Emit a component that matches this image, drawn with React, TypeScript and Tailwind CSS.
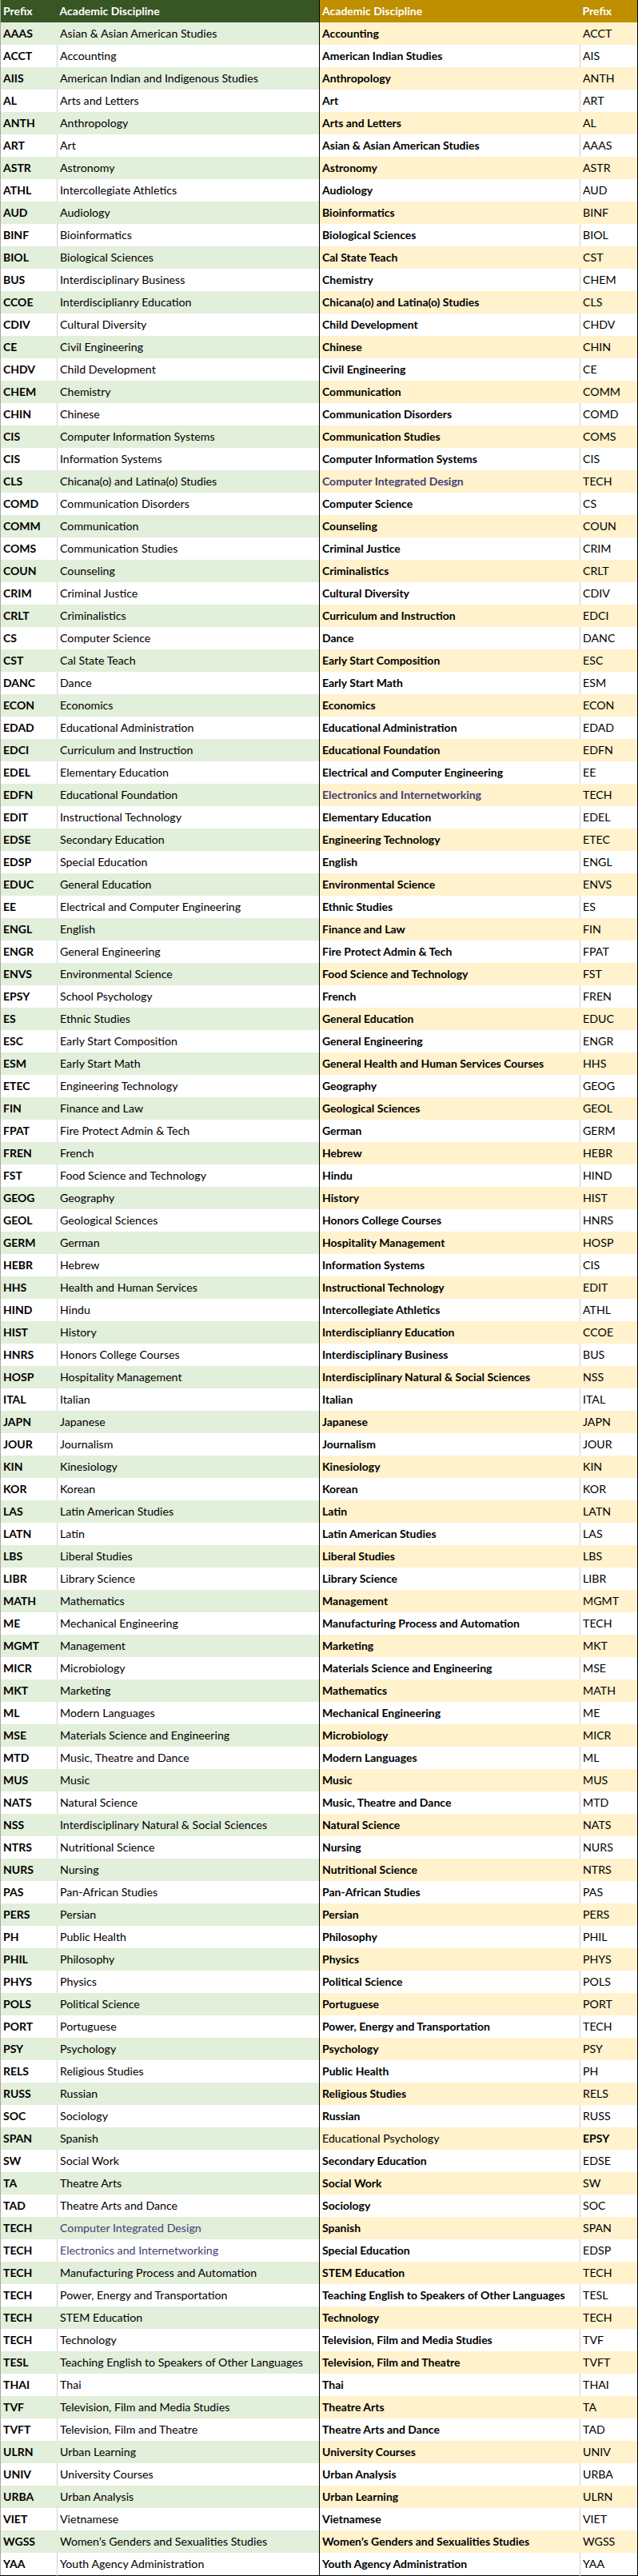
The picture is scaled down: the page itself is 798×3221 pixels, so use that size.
import React from 'react';

type Row = [string, string, string?];

// prefix -> discipline, sorted by prefix
const byPrefix: Row[] = [
  ['AAAS', 'Asian & Asian American Studies'],
  ['ACCT', 'Accounting'],
  ['AIIS', 'American Indian and Indigenous Studies'],
  ['AL', 'Arts and Letters'],
  ['ANTH', 'Anthropology'],
  ['ART', 'Art'],
  ['ASTR', 'Astronomy'],
  ['ATHL', 'Intercollegiate Athletics'],
  ['AUD', 'Audiology'],
  ['BINF', 'Bioinformatics'],
  ['BIOL', 'Biological Sciences'],
  ['BUS', 'Interdisciplinary Business'],
  ['CCOE', 'Interdisciplianry Education'],
  ['CDIV', 'Cultural Diversity'],
  ['CE', 'Civil Engineering'],
  ['CHDV', 'Child Development'],
  ['CHEM', 'Chemistry'],
  ['CHIN', 'Chinese'],
  ['CIS', 'Computer Information Systems'],
  ['CIS', 'Information Systems'],
  ['CLS', 'Chicana(o) and Latina(o) Studies'],
  ['COMD', 'Communication Disorders'],
  ['COMM', 'Communication'],
  ['COMS', 'Communication Studies'],
  ['COUN', 'Counseling'],
  ['CRIM', 'Criminal Justice'],
  ['CRLT', 'Criminalistics'],
  ['CS', 'Computer Science'],
  ['CST', 'Cal State Teach'],
  ['DANC', 'Dance'],
  ['ECON', 'Economics'],
  ['EDAD', 'Educational Administration'],
  ['EDCI', 'Curriculum and Instruction'],
  ['EDEL', 'Elementary Education'],
  ['EDFN', 'Educational Foundation'],
  ['EDIT', 'Instructional Technology'],
  ['EDSE', 'Secondary Education'],
  ['EDSP', 'Special Education'],
  ['EDUC', 'General Education'],
  ['EE', 'Electrical and Computer Engineering'],
  ['ENGL', 'English'],
  ['ENGR', 'General Engineering'],
  ['ENVS', 'Environmental Science'],
  ['EPSY', 'School Psychology'],
  ['ES', 'Ethnic Studies'],
  ['ESC', 'Early Start Composition'],
  ['ESM', 'Early Start Math'],
  ['ETEC', 'Engineering Technology'],
  ['FIN', 'Finance and Law'],
  ['FPAT', 'Fire Protect Admin & Tech'],
  ['FREN', 'French'],
  ['FST', 'Food Science and Technology'],
  ['GEOG', 'Geography'],
  ['GEOL', 'Geological Sciences'],
  ['GERM', 'German'],
  ['HEBR', 'Hebrew'],
  ['HHS', 'Health and Human Services'],
  ['HIND', 'Hindu'],
  ['HIST', 'History'],
  ['HNRS', 'Honors College Courses'],
  ['HOSP', 'Hospitality Management'],
  ['ITAL', 'Italian'],
  ['JAPN', 'Japanese'],
  ['JOUR', 'Journalism'],
  ['KIN', 'Kinesiology'],
  ['KOR', 'Korean'],
  ['LAS', 'Latin American Studies'],
  ['LATN', 'Latin'],
  ['LBS', 'Liberal Studies'],
  ['LIBR', 'Library Science'],
  ['MATH', 'Mathematics'],
  ['ME', 'Mechanical Engineering'],
  ['MGMT', 'Management'],
  ['MICR', 'Microbiology'],
  ['MKT', 'Marketing'],
  ['ML', 'Modern Languages'],
  ['MSE', 'Materials Science and Engineering'],
  ['MTD', 'Music, Theatre and Dance'],
  ['MUS', 'Music'],
  ['NATS', 'Natural Science'],
  ['NSS', 'Interdisciplinary Natural & Social Sciences'],
  ['NTRS', 'Nutritional Science'],
  ['NURS', 'Nursing'],
  ['PAS', 'Pan-African Studies'],
  ['PERS', 'Persian'],
  ['PH', 'Public Health'],
  ['PHIL', 'Philosophy'],
  ['PHYS', 'Physics'],
  ['POLS', 'Political Science'],
  ['PORT', 'Portuguese'],
  ['PSY', 'Psychology'],
  ['RELS', 'Religious Studies'],
  ['RUSS', 'Russian'],
  ['SOC', 'Sociology'],
  ['SPAN', 'Spanish'],
  ['SW', 'Social Work'],
  ['TA', 'Theatre Arts'],
  ['TAD', 'Theatre Arts and Dance'],
  ['TECH', 'Computer Integrated Design', 'input'],
  ['TECH', 'Electronics and Internetworking', 'input'],
  ['TECH', 'Manufacturing Process and Automation'],
  ['TECH', 'Power, Energy and Transportation'],
  ['TECH', 'STEM Education'],
  ['TECH', 'Technology'],
  ['TESL', 'Teaching English to Speakers of Other Languages'],
  ['THAI', 'Thai'],
  ['TVF', 'Television, Film and Media Studies'],
  ['TVFT', 'Television, Film and Theatre'],
  ['ULRN', 'Urban Learning'],
  ['UNIV', 'University Courses'],
  ['URBA', 'Urban Analysis'],
  ['VIET', 'Vietnamese'],
  ['WGSS', 'Women’s Genders and Sexualities Studies'],
  ['YAA', 'Youth Agency Administration'],
];

// discipline -> prefix, sorted by name
const byName: Row[] = [
  ['Accounting', 'ACCT'],
  ['American Indian Studies', 'AIS'],
  ['Anthropology', 'ANTH'],
  ['Art', 'ART'],
  ['Arts and Letters', 'AL'],
  ['Asian & Asian American Studies', 'AAAS'],
  ['Astronomy', 'ASTR'],
  ['Audiology', 'AUD'],
  ['Bioinformatics', 'BINF'],
  ['Biological Sciences', 'BIOL'],
  ['Cal State Teach', 'CST'],
  ['Chemistry', 'CHEM'],
  ['Chicana(o) and Latina(o) Studies', 'CLS'],
  ['Child Development', 'CHDV'],
  ['Chinese', 'CHIN'],
  ['Civil Engineering', 'CE'],
  ['Communication', 'COMM'],
  ['Communication Disorders', 'COMD'],
  ['Communication Studies', 'COMS'],
  ['Computer Information Systems', 'CIS'],
  ['Computer Integrated Design', 'TECH', 'input'],
  ['Computer Science', 'CS'],
  ['Counseling', 'COUN'],
  ['Criminal Justice', 'CRIM'],
  ['Criminalistics', 'CRLT'],
  ['Cultural Diversity', 'CDIV'],
  ['Curriculum and Instruction', 'EDCI'],
  ['Dance', 'DANC'],
  ['Early Start Composition', 'ESC'],
  ['Early Start Math', 'ESM'],
  ['Economics', 'ECON'],
  ['Educational Administration', 'EDAD'],
  ['Educational Foundation', 'EDFN'],
  ['Electrical and Computer Engineering', 'EE'],
  ['Electronics and Internetworking', 'TECH', 'input'],
  ['Elementary Education', 'EDEL'],
  ['Engineering Technology', 'ETEC'],
  ['English', 'ENGL'],
  ['Environmental Science', 'ENVS'],
  ['Ethnic Studies', 'ES'],
  ['Finance and Law', 'FIN'],
  ['Fire Protect Admin & Tech', 'FPAT'],
  ['Food Science and Technology', 'FST'],
  ['French', 'FREN'],
  ['General Education', 'EDUC'],
  ['General Engineering', 'ENGR'],
  ['General Health and Human Services Courses', 'HHS'],
  ['Geography', 'GEOG'],
  ['Geological Sciences', 'GEOL'],
  ['German', 'GERM'],
  ['Hebrew', 'HEBR'],
  ['Hindu', 'HIND'],
  ['History', 'HIST'],
  ['Honors College Courses', 'HNRS'],
  ['Hospitality Management', 'HOSP'],
  ['Information Systems', 'CIS'],
  ['Instructional Technology', 'EDIT'],
  ['Intercollegiate Athletics', 'ATHL'],
  ['Interdisciplianry Education', 'CCOE'],
  ['Interdisciplinary Business', 'BUS'],
  ['Interdisciplinary Natural & Social Sciences', 'NSS'],
  ['Italian', 'ITAL'],
  ['Japanese', 'JAPN'],
  ['Journalism', 'JOUR'],
  ['Kinesiology', 'KIN'],
  ['Korean', 'KOR'],
  ['Latin', 'LATN'],
  ['Latin American Studies', 'LAS'],
  ['Liberal Studies', 'LBS'],
  ['Library Science', 'LIBR'],
  ['Management', 'MGMT'],
  ['Manufacturing Process and Automation', 'TECH'],
  ['Marketing', 'MKT'],
  ['Materials Science and Engineering', 'MSE'],
  ['Mathematics', 'MATH'],
  ['Mechanical Engineering', 'ME'],
  ['Microbiology', 'MICR'],
  ['Modern Languages', 'ML'],
  ['Music', 'MUS'],
  ['Music, Theatre and Dance', 'MTD'],
  ['Natural Science', 'NATS'],
  ['Nursing', 'NURS'],
  ['Nutritional Science', 'NTRS'],
  ['Pan-African Studies', 'PAS'],
  ['Persian', 'PERS'],
  ['Philosophy', 'PHIL'],
  ['Physics', 'PHYS'],
  ['Political Science', 'POLS'],
  ['Portuguese', 'PORT'],
  ['Power, Energy and Transportation', 'TECH'],
  ['Psychology', 'PSY'],
  ['Public Health', 'PH'],
  ['Religious Studies', 'RELS'],
  ['Russian', 'RUSS'],
  ['Educational Psychology', 'EPSY', 'swap'],
  ['Secondary Education', 'EDSE'],
  ['Social Work', 'SW'],
  ['Sociology', 'SOC'],
  ['Spanish', 'SPAN'],
  ['Special Education', 'EDSP'],
  ['STEM Education', 'TECH'],
  ['Teaching English to Speakers of Other Languages', 'TESL'],
  ['Technology', 'TECH'],
  ['Television, Film and Media Studies', 'TVF'],
  ['Television, Film and Theatre', 'TVFT'],
  ['Thai', 'THAI'],
  ['Theatre Arts', 'TA'],
  ['Theatre Arts and Dance', 'TAD'],
  ['University Courses', 'UNIV'],
  ['Urban Analysis', 'URBA'],
  ['Urban Learning', 'ULRN'],
  ['Vietnamese', 'VIET'],
  ['Women’s Genders and Sexualities Studies', 'WGSS'],
  ['Youth Agency Administration', 'YAA'],
];

// Lato regular runs a little narrower than the sheet's font, bold is about right
const regular = 'font-normal text-[14.2px]';
const bold = 'font-bold text-[14px]';

const PrefixTable = () => (
  <table className="w-[399px] table-fixed border-collapse border-l border-b border-l-[#a6a6a6] border-b-black">
    <colgroup>
      <col className="w-[71px]" />
      <col />
    </colgroup>
    <thead>
      <tr className="h-[28px] bg-[#375623] text-white">
        <th className={`px-[3px] text-left ${bold}`}>Prefix</th>
        <th className={`px-[3px] text-left ${bold}`}>Academic Discipline</th>
      </tr>
    </thead>
    <tbody>
      {byPrefix.map(([prefix, name, kind], i) => {
        const striped = i % 2 === 0;
        return (
          <tr key={i} className={`h-[28px] ${striped ? 'bg-[#e2efda]' : 'bg-white'}`}>
            <td className={`px-[3px] border-r ${bold} ${striped ? 'border-r-[#e2efda]' : 'border-r-[#d0d0d0]'}`}>{prefix}</td>
            <td className={`px-[3px] whitespace-nowrap ${regular} ${kind === 'input' ? 'text-[#3f3f76]' : ''}`}>{name}</td>
          </tr>
        );
      })}
    </tbody>
  </table>
);

const NameTable = () => (
  <table className="w-[399px] table-fixed border-collapse border-x border-b border-black">
    <colgroup>
      <col />
      <col className="w-[72px]" />
    </colgroup>
    <thead>
      <tr className="h-[28px] bg-[#bf8f00] text-white">
        <th className={`px-[3px] text-left ${bold}`}>Academic Discipline</th>
        <th className={`px-[3px] text-left ${bold}`}>Prefix</th>
      </tr>
    </thead>
    <tbody>
      {byName.map(([name, prefix, kind], i) => {
        const striped = i % 2 === 0;
        return (
          <tr key={i} className={`h-[28px] ${striped ? 'bg-[#fff2cc]' : 'bg-white'}`}>
            <td
              className={`px-[3px] whitespace-nowrap border-r ${striped ? 'border-r-[#fff2cc]' : 'border-r-[#d0d0d0]'} ${
                kind === 'swap' ? regular : bold
              } ${kind === 'input' ? 'text-[#3f3f76]' : ''}`}
            >
              {name}
            </td>
            <td className={`px-[3px] ${kind === 'swap' ? bold : regular}`}>{prefix}</td>
          </tr>
        );
      })}
    </tbody>
  </table>
);

export default function App() {
  return (
    <div className="flex w-[798px] items-start bg-white leading-none text-black font-['Lato',sans-serif]">
      <PrefixTable />
      <NameTable />
    </div>
  );
}
